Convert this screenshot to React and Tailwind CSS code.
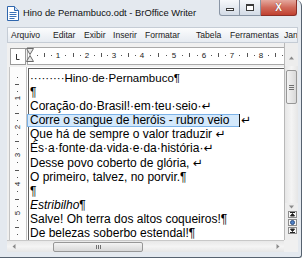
const hDigits = [58, 87, 114, 142, 174, 204, 232, 261];
const vDigits = [98, 127, 155, 184, 213];

function HRuler() {
  const pts = [29.5, ...hDigits, 289];
  const ticks = [];
  for (let i = 0; i < pts.length - 1; i++) {
    const a = pts[i];
    const b = pts[i + 1];
    const q = (b - a) / 4;
    ticks.push({ x: a + q, t: "dot" });
    ticks.push({ x: a + 2 * q, t: "dash" });
    ticks.push({ x: a + 3 * q, t: "dot" });
  }
  return (
    <svg width="277" height="24" viewBox="0 0 277 24" className="block">
      <rect x="3.5" y="5.5" width="15" height="16" fill="#fff" stroke="#9a9a9a" />
      <path d="M9.5 11v5.5h3" fill="none" stroke="#333" strokeWidth="1" />
      <rect x="20.5" y="4.5" width="257" height="17" fill="#fff" stroke="#a9a9a9" />
      {ticks
        .filter((t) => t.x - 7 < 276 && t.x - 7 > 27)
        .map((t, i) =>
          t.t === "dot" ? (
            <rect key={i} x={Math.round(t.x - 7)} y="12" width="1" height="1" fill="#555" />
          ) : (
            <rect key={i} x={Math.round(t.x - 7)} y="10" width="1" height="4" fill="#555" />
          )
        )}
      {hDigits.map((d, i) => (
        <text
          key={i}
          x={d - 7}
          y="15"
          textAnchor="middle"
          fontSize="8"
          fontFamily="Liberation Sans, sans-serif"
          fill="#222"
        >
          {i + 1}
        </text>
      ))}
      <path d="M19.5 5.5h7l-3.5 6z" fill="#e8e8e8" stroke="#6a6a6a" />
      <path d="M19.5 18.5h7l-3.5 -6z" fill="#e8e8e8" stroke="#6a6a6a" />
    </svg>
  );
}

function VRuler() {
  const pts = [69.5, ...vDigits, 241];
  const ticks = [];
  for (let i = 0; i < pts.length - 1; i++) {
    const a = pts[i];
    const b = pts[i + 1];
    const q = (b - a) / 4;
    ticks.push({ y: a + q, t: "dot" });
    ticks.push({ y: a + 2 * q, t: "dash" });
    ticks.push({ y: a + 3 * q, t: "dot" });
  }
  return (
    <svg width="20" height="173" viewBox="0 0 20 173" className="block">
      <rect x="2.5" y="-1" width="17" height="175" fill="#fcfcfc" stroke="#c4c4c4" />
      {ticks
        .filter((t) => t.y - 67 < 172)
        .map((t, i) =>
          t.t === "dot" ? (
            <rect key={i} x="10" y={Math.round(t.y - 67)} width="1" height="1" fill="#555" />
          ) : (
            <rect key={i} x="8" y={Math.round(t.y - 67)} width="4" height="1" fill="#555" />
          )
        )}
      {vDigits.map((d, i) => (
        <text
          key={i}
          x="0"
          y="0"
          transform={`translate(13 ${d - 67}) rotate(-90)`}
          textAnchor="middle"
          fontSize="8"
          fontFamily="Liberation Sans, sans-serif"
          fill="#222"
        >
          {i + 1}
        </text>
      ))}
    </svg>
  );
}

function Arrow({ dir }) {
  const d = {
    up: "M0 3.5L2.5 0.5L5 3.5z",
    down: "M0 0.5L2.5 3.5L5 0.5z",
    left: "M3.5 0L0.5 2.5L3.5 5z",
    right: "M0.5 0L3.5 2.5L0.5 5z",
  }[dir];
  const vert = dir === "up" || dir === "down";
  return (
    <svg width={vert ? 5 : 4} height={vert ? 4 : 5} viewBox={vert ? "0 0 5 4" : "0 0 4 5"}>
      <path d={d} fill="#8a8a8a" />
    </svg>
  );
}

export default function App() {
  return (
    <div className="w-[308px] h-[262px] bg-white relative overflow-hidden font-['Liberation_Sans','DejaVu_Sans',sans-serif]">
      <div className="w-[302px] h-[258px] bg-[#e4e9ef] border-r border-b border-[#56626f] rounded-tr-[6px] rounded-br-[3px] flex flex-col">
        {/* Title bar */}
        <div className="h-[27px] relative flex items-center pl-[7px] pb-[1px]">
          <svg width="12" height="15" viewBox="0 0 12 15" className="mt-[1px]">
            <path d="M0.5 0.5h7l4 4v10h-11z" fill="#fff" stroke="#2f66ad" />
            <path d="M7.5 0.5v4h4" fill="#cfe0f5" stroke="#2f66ad" />
            <path d="M2.5 6.5h7M2.5 8.5h7M2.5 10.5h7M2.5 12.5h5" stroke="#3a72b8" />
          </svg>
          <span className="ml-[4px] text-[9.4px] text-[#111] leading-none">
            Hino de Pernambuco.odt - BrOffice Writer
          </span>
          <div className="absolute top-0 right-[4px] flex h-[16px]">
            <div className="w-[21px] h-full border border-t-0 border-[#8995a5] rounded-bl-[3px] bg-linear-to-b from-[#f6f8fb] to-[#d3dbe6] flex items-end justify-center pb-[4px]">
              <div className="w-[8px] h-[3px] border border-[#3b3b3b] bg-white" />
            </div>
            <div className="w-[21px] h-full border border-t-0 border-l-0 border-[#8995a5] bg-linear-to-b from-[#f6f8fb] to-[#d3dbe6] flex items-center justify-center">
              <div className="w-[8px] h-[7px] border border-t-2 border-[#3b3b3b] bg-white" />
            </div>
            <div className="w-[36px] h-full border border-t-0 border-l-0 border-[#8a2f27] rounded-br-[3px] bg-linear-to-b from-[#e4a89e] via-[#d06a5b] to-[#c1402f] flex items-center justify-center">
              <span className="text-white font-bold text-[10px] leading-none [text-shadow:0_0_1px_#5a1a14]">X</span>
            </div>
          </div>
        </div>

        {/* Client */}
        <div className="ml-[7px] mr-[3px] flex flex-col bg-[#f0f0f0]">
          {/* Menu */}
          <div className="h-[16px] border border-[#c5ccd5] bg-linear-to-b from-[#fbfcfd] to-[#e6ebf1] flex items-center text-[8.6px] text-[#1a1a1a] pl-[3px] whitespace-nowrap overflow-hidden">
            <span className="w-[42px] shrink-0">Arquivo</span>
            <span className="w-[31px] shrink-0">Editar</span>
            <span className="w-[29px] shrink-0">Exibir</span>
            <span className="w-[32px] shrink-0">Inserir</span>
            <span className="w-[51px] shrink-0">Formatar</span>
            <span className="w-[34px] shrink-0">Tabela</span>
            <span className="w-[54px] shrink-0">Ferramentas</span>
            <span className="shrink-0">Janela</span>
          </div>

          <div className="grid grid-cols-[20px_257px_14px] grid-rows-[24px_173px]">
            <div className="col-span-2">
              <HRuler />
            </div>
            <div className="row-span-2 border-l border-[#b8b8b8] bg-[#ededed] flex flex-col items-center">
              <div className="h-[7px]" />
              <div className="h-[16px] flex items-center justify-center">
                <Arrow dir="up" />
              </div>
              <div className="h-[137px] w-full flex flex-col items-center bg-linear-to-r from-[#e6e6e6] via-[#f4f4f4] to-[#e6e6e6]">
                <div className="mt-[4px] w-[11px] h-[34px] rounded-[2px] border border-[#979797] bg-linear-to-r from-[#f3f3f3] to-[#d9d9d9] flex flex-col items-center justify-center gap-[1px]">
                  <div className="w-[5px] h-[1px] bg-[#707070]" />
                  <div className="w-[5px] h-[1px] bg-[#707070]" />
                  <div className="w-[5px] h-[1px] bg-[#707070]" />
                </div>
              </div>
              <div className="h-[8px] flex items-center justify-center">
                <Arrow dir="down" />
              </div>
              <div className="flex flex-col gap-[1px] pl-[2px]">
                <div className="w-[9px] h-[7px] border border-[#8c8c8c] bg-[#f6f6f6] flex items-center justify-center">
                  <svg width="5" height="5" viewBox="0 0 5 5">
                    <path d="M0 0.5h5M0.5 4L2.5 1.5L4.5 4z" stroke="#222" strokeWidth="1" fill="#222" />
                  </svg>
                </div>
                <div className="w-[9px] h-[7px] border border-[#8c8c8c] bg-[#f6f6f6] flex items-center justify-center">
                  <div className="w-[5px] h-[5px] rounded-full bg-[#4d7fc4] border border-[#2b4f86]" />
                </div>
                <div className="w-[9px] h-[7px] border border-[#8c8c8c] bg-[#f6f6f6] flex items-center justify-center">
                  <svg width="5" height="5" viewBox="0 0 5 5">
                    <path d="M0 4.5h5M0.5 1L2.5 3.5L4.5 1z" stroke="#222" strokeWidth="1" fill="#222" />
                  </svg>
                </div>
              </div>
              <div className="h-[6px]" />
            </div>

            <div>
              <VRuler />
            </div>
            <div className="bg-white overflow-hidden">
              <div className="ml-[1px] mt-[1px] h-[172px] border-l border-t border-[#5e5e5e] pl-[1px] pt-[2px] text-[12px] leading-[14.1px] text-black whitespace-pre">
                <div className="text-[11.5px]">·········Hino·de·Pernambuco¶</div>
                <div>¶</div>
                <div>Coração·do·Brasil!·em·teu·seio·↵</div>
                <div className="relative flex">
                  <span className="absolute left-[-3px] top-[1px] w-[213px] h-[13px] border border-[#7db3e8] bg-[#d4e9fc]" />
                  <span className="absolute left-[209px] top-[1px] w-[1px] h-[13px] bg-[#1a1a1a]" />
                  <span className="relative w-[211px]">Corre o sangue de heróis - rubro veio</span>
                  <span className="relative">↵</span>
                </div>
                <div>Que há de sempre o valor traduzir ↵</div>
                <div>És·a·fonte·da·vida·e·da·história·↵</div>
                <div>Desse povo coberto de glória, ↵</div>
                <div>O primeiro, talvez, no porvir.¶</div>
                <div>¶</div>
                <div className="italic">
                  Estribilho<span className="not-italic">¶</span>
                </div>
                <div>Salve! Oh terra dos altos coqueiros!¶</div>
                <div>De belezas soberbo estendal!¶</div>
              </div>
            </div>
          </div>

          {/* Horizontal scrollbar */}
          <div className="h-[12px] flex">
            <div className="w-[277px] h-full border-t border-[#c8c8c8] bg-linear-to-b from-[#e8e8e8] via-[#f4f4f4] to-[#e6e6e6] flex items-center">
              <div className="w-[12px] flex justify-center ml-[1px]">
                <Arrow dir="left" />
              </div>
              <div className="ml-[33px] w-[90px] h-[10px] rounded-[2px] border border-[#979797] bg-linear-to-b from-[#f4f4f4] to-[#d8d8d8] flex items-center justify-center gap-[1px]">
                <div className="w-[1px] h-[4px] bg-[#707070]" />
                <div className="w-[1px] h-[4px] bg-[#707070]" />
                <div className="w-[1px] h-[4px] bg-[#707070]" />
              </div>
              <div className="flex-1" />
              <div className="w-[12px] flex justify-center">
                <Arrow dir="right" />
              </div>
            </div>
            <div className="w-[14px] h-full bg-[#f0f0f0]" />
          </div>
        </div>
      </div>
    </div>
  );
}
